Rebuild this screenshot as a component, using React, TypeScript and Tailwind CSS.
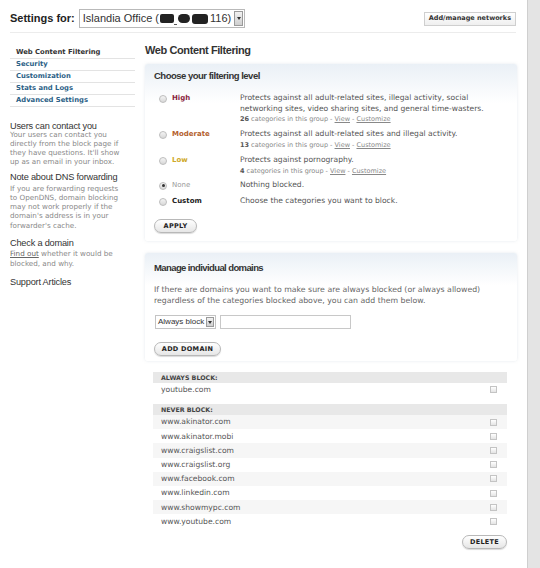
import React from "react";

const V = "font-['DejaVu_Sans',Verdana,sans-serif]";
const A = "font-['Liberation_Sans',Arial,sans-serif]";

const levels = [
  {
    name: "High",
    color: "text-[#8a1f3f]",
    desc: ["Protects against all adult-related sites, illegal activity, social", "networking sites, video sharing sites, and general time-wasters."],
    count: "26",
    h: "h-[36px]",
  },
  {
    name: "Moderate",
    color: "text-[#b4612e]",
    desc: ["Protects against all adult-related sites and illegal activity."],
    count: "13",
    h: "h-[26px]",
  },
  {
    name: "Low",
    color: "text-[#cfa92a]",
    desc: ["Protects against pornography."],
    count: "4",
    h: "h-[25px]",
  },
  { name: "None", color: "text-[#9a9a9a] font-normal", desc: ["Nothing blocked."], checked: true, h: "h-[16px]" },
  { name: "Custom", color: "text-[#222]", desc: ["Choose the categories you want to block."], h: "h-[13px]" },
];

const never = [
  "www.akinator.com",
  "www.akinator.mobi",
  "www.craigslist.com",
  "www.craigslist.org",
  "www.facebook.com",
  "www.linkedin.com",
  "www.showmypc.com",
  "www.youtube.com",
];

function Radio({ checked }: { checked?: boolean }) {
  return (
    <span className="mt-[1.5px] flex h-[8px] w-[8px] shrink-0 items-center justify-center rounded-full border border-[#bdbdbd] bg-gradient-to-b from-[#f4f4f4] to-[#d8d8d8]">
      {checked && <span className="h-[3px] w-[3px] rounded-full bg-[#333]" />}
    </span>
  );
}

function Pill({ children, w }: { children: React.ReactNode; w: string }) {
  return (
    <button
      className={`${w} block h-[14px] rounded-full border border-[#b8b8b8] bg-gradient-to-b from-white to-[#e6e6e6] text-[6.5px] font-bold leading-[12px] tracking-[0.3px] text-[#222] shadow-[0_1px_1px_rgba(0,0,0,0.15)] ${V}`}
    >
      {children}
    </button>
  );
}

function Check() {
  return <span className="block h-[7px] w-[7px] border border-[#c4c4c4] bg-gradient-to-b from-white to-[#e4e4e4]" />;
}

function SideHead({ children, mt }: { children: React.ReactNode; mt: string }) {
  return <h3 className={`${mt} text-[9.2px] leading-[8px] tracking-[-0.2px] text-[#333] ${A}`}>{children}</h3>;
}

export default function App() {
  return (
    <div className="flex h-[568px] w-[540px] overflow-hidden bg-white text-[#444]">
      <div className="flex-1">
        {/* header */}
        <div className="ml-[10px] mr-[11px] flex items-center justify-between border-b border-[#ececec] pb-[4px] pt-[9px]">
          <div className="flex items-center gap-[4px]">
            <span className={`text-[11px] font-bold text-[#222] ${A}`}>Settings for:</span>
            <div className="flex h-[19px] items-center border border-[#b9b9b9] bg-white pl-[3px] pr-[1px]">
              <span className={`flex items-center text-[11px] text-[#333] ${A}`}>
                Islandia Office (
                <span className="ml-[1px] inline-block h-[9px] w-[14px] rounded-[2px] bg-[#222]" />
                <span className="mb-[2px] inline-block h-[1px] w-[3px] self-end bg-[#555]" />
                <span className="ml-[1px] inline-block h-[9px] w-[12px] rounded-full bg-[#222]" />
                <span className="mx-[2px] inline-block h-[10px] w-[16px] rounded-[3px] bg-[#222]" />
                116)
              </span>
              <span className="ml-[3px] flex h-[15px] w-[9px] items-center justify-center border border-[#9a9a9a] bg-gradient-to-b from-[#f2f2f2] to-[#cfcfcf]">
                <span className="border-x-[2px] border-t-[3px] border-x-transparent border-t-[#333]" />
              </span>
            </div>
          </div>
          <button
            className={`h-[14px] border border-[#cfcfcf] bg-gradient-to-b from-white to-[#efefef] px-[4px] text-[6.5px] font-bold text-[#333] ${V}`}
          >
            Add/manage networks
          </button>
        </div>

        <div className="flex pl-[10px] pt-[11px]">
          {/* left column */}
          <div className={`w-[125px] ${V}`}>
            <ul className="mt-[3px] text-[6.8px] font-bold leading-[11px] text-[#2b5f86]">
              {["Web Content Filtering", "Security", "Customization", "Stats and Logs", "Advanced Settings"].map((t, i) => (
                <li key={t} className={`border-b border-[#e3e3e3] pl-[6px] ${i === 0 ? "text-[#333]" : ""}`}>
                  {t}
                </li>
              ))}
            </ul>

            <SideHead mt="mt-[15px]">Users can contact you</SideHead>
            <p className="w-[116px] text-[7.2px] leading-[9px] text-[#888]">
              Your users can contact you directly from the block page if they have questions. It'll show up as an email in your inbox.
            </p>

            <SideHead mt="mt-[7px]">Note about DNS forwarding</SideHead>
            <p className="mt-[2.5px] w-[116px] text-[7.2px] leading-[9.3px] text-[#888]">
              If you are forwarding requests to OpenDNS, domain blocking may not work properly if the domain's address is in your forwarder's cache.
            </p>

            <SideHead mt="mt-[9px]">Check a domain</SideHead>
            <p className="mt-[2.5px] w-[116px] text-[7.2px] leading-[9.3px] text-[#888]">
              <span className="text-[#666] underline">Find out</span> whether it would be blocked, and why.
            </p>

            <SideHead mt="mt-[10px]">Support Articles</SideHead>
          </div>

          {/* main column */}
          <div className="ml-[10px] w-[372px]">
            <h2 className={`text-[11px] font-bold leading-[13px] tracking-[-0.4px] text-[#333] ${A}`}>Web Content Filtering</h2>

            <div className="mt-[7px] rounded-[3px] bg-gradient-to-b from-[#eaf0f6] via-white via-[22%] to-white pb-[8px] shadow-[0_0_3px_rgba(200,210,220,0.5)]">
              <h3 className={`pl-[9px] pt-[6px] text-[9.5px] font-bold leading-[12px] tracking-[-0.5px] text-[#333] ${A}`}>
                Choose your filtering level
              </h3>
              <div className={`mt-[11px] pl-[14px] ${V}`}>
                {levels.map((l) => (
                  <div key={l.name} className={`flex ${l.h}`}>
                    <div className="flex w-[81px] items-start gap-[5px]">
                      <Radio checked={l.checked} />
                      <span className={`text-[7px] font-bold leading-[11px] ${l.color}`}>{l.name}</span>
                    </div>
                    <div className="text-[7.6px] leading-[10.5px] text-[#555]">
                      {l.desc.map((d) => (
                        <div key={d}>{d}</div>
                      ))}
                      {l.count && (
                        <div className="text-[6.5px] leading-[11px] text-[#888]">
                          <span className="font-bold text-[#555]">{l.count}</span> categories in this group -{" "}
                          <span className="underline">View</span> - <span className="underline">Customize</span>
                        </div>
                      )}
                    </div>
                  </div>
                ))}
              </div>
              <div className="mt-[10px] pl-[9px]">
                <Pill w="w-[43px]">APPLY</Pill>
              </div>
            </div>

            <div className="mt-[12px] rounded-[3px] bg-gradient-to-b from-[#eaf0f6] via-white via-[30%] to-white pb-[5px] shadow-[0_0_3px_rgba(200,210,220,0.5)]">
              <h3 className={`pl-[9px] pt-[9px] text-[9.5px] font-bold leading-[12px] tracking-[-0.6px] text-[#333] ${A}`}>
                Manage individual domains
              </h3>
              <p className={`mt-[10px] pl-[9px] text-[7.8px] leading-[11px] text-[#666] ${V}`}>
                If there are domains you want to make sure are always blocked (or always allowed)
                <br />
                regardless of the categories blocked above, you can add them below.
              </p>
              <div className="mt-[9px] flex items-center gap-[4px] pl-[10px]">
                <div className="flex h-[14px] items-center border border-[#c4c4c4] bg-white pl-[2px] pr-[1px]">
                  <span className={`text-[8px] text-[#333] ${A}`}>Always block</span>
                  <span className="ml-[2px] flex h-[10px] w-[8px] items-center justify-center border border-[#9a9a9a] bg-gradient-to-b from-[#f2f2f2] to-[#cfcfcf]">
                    <span className="border-x-[2px] border-t-[3px] border-x-transparent border-t-[#333]" />
                  </span>
                </div>
                <div className="h-[14px] w-[131px] border border-[#c8c8c8] bg-white" />
              </div>
              <div className="mt-[13px] pl-[9px]">
                <Pill w="w-[67px]">ADD DOMAIN</Pill>
              </div>
            </div>

            {/* domain lists */}
            <div className={`ml-[8px] mt-[11px] w-[354px] ${V}`}>
              <div className="bg-[#e8e8e8] pl-[8px] text-[6.3px] font-bold leading-[11px] text-[#444]">ALWAYS BLOCK:</div>
              <div className="flex h-[13px] items-center justify-between pl-[8px] pr-[10px] text-[7.6px] text-[#555]">
                <span>youtube.com</span>
                <Check />
              </div>
              <div className="mt-[8px] bg-[#e8e8e8] pl-[8px] text-[6.3px] font-bold leading-[11px] text-[#444]">NEVER BLOCK:</div>
              {never.map((d, i) => (
                <div
                  key={d}
                  className={`flex h-[14.2px] items-center justify-between pl-[8px] pr-[10px] text-[7.6px] text-[#555] ${i % 2 === 0 ? "bg-[#f6f6f6]" : ""}`}
                >
                  <span>{d}</span>
                  <Check />
                </div>
              ))}
              <div className="mt-[6px] flex justify-end">
                <Pill w="w-[45px]">DELETE</Pill>
              </div>
            </div>
          </div>
        </div>
      </div>
      <div className="w-[13px] border-l border-[#cfcfcf] bg-[#e4e4e4]" />
    </div>
  );
}
